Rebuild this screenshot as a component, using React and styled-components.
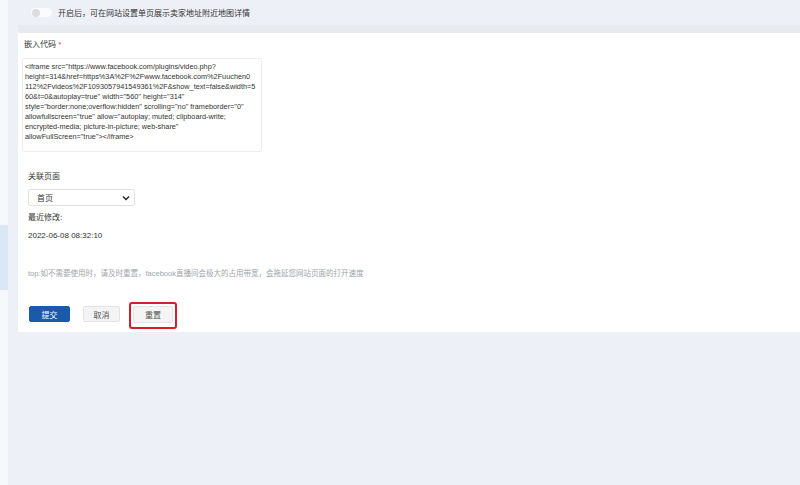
import React from "react";
import styled, { createGlobalStyle } from "styled-components";

const GlobalStyle = createGlobalStyle`
  html, body {
    margin: 0;
    padding: 0;
    background: #eef0f8;
    font-family: "Liberation Sans", "Noto Sans CJK SC", sans-serif;
    color: #333;
  }
`;

const codeLines = [
  '<iframe src="https://www.facebook.com/plugins/video.php?',
  "height=314&href=https%3A%2F%2Fwww.facebook.com%2Fuuchen0",
  "112%2Fvideos%2F1093057941549361%2F&show_text=false&width=5",
  '60&t=0&autoplay=true" width="560" height="314"',
  'style="border:none;overflow:hidden" scrolling="no" frameborder="0"',
  'allowfullscreen="true" allow="autoplay; muted; clipboard-write;',
  'encrypted-media; picture-in-picture; web-share"',
  'allowFullScreen="true"></iframe>',
];

export default function App() {
  return (
    <>
      <GlobalStyle />
      <Page>
        <Sidebar>
          <SideActive />
        </Sidebar>
        <Main>
          <TopBar>
            <Toggle>
              <Knob />
            </Toggle>
            <TopText>开启后，可在网站设置单页展示卖家地址附近地图详情</TopText>
          </TopBar>
          <Card>
            <FieldLabel>
              嵌入代码 <Star>*</Star>
            </FieldLabel>
            <CodeBox>
              {codeLines.map((line, i) => (
                <CodeLine key={i}>{line}</CodeLine>
              ))}
            </CodeBox>

            <SubBlock>
              <SubLabel>关联页面</SubLabel>
              <Select>
                <span>首页</span>
                <svg width="8" height="6" viewBox="0 0 8 6">
                  <path
                    d="M1 1.5 L4 4.5 L7 1.5"
                    fill="none"
                    stroke="#222"
                    strokeWidth="1.4"
                  />
                </svg>
              </Select>
              <SubLabel $top={7}>最近修改:</SubLabel>
              <DateText>2022-06-08 08:32:10</DateText>
            </SubBlock>

            <Tip>
              top:如不需要使用时，请及时重置，facebook直播间会极大的占用带宽，会拖延您网站页面的打开速度
            </Tip>

            <Actions>
              <Button $primary>提交</Button>
              <Button>取消</Button>
              <Highlight>
                <Button $wide>重置</Button>
              </Highlight>
            </Actions>
          </Card>
        </Main>
      </Page>
    </>
  );
}

const Page = styled.div`
  display: flex;
  min-height: 485px;
`;

const Sidebar = styled.div`
  width: 8px;
  background: #f7f8fb;
  padding-top: 225px;
  flex-shrink: 0;
`;

const SideActive = styled.div`
  height: 65px;
  background: #dce7f5;
`;

const Main = styled.div`
  flex: 1;
  padding-left: 10px;
  display: flex;
  flex-direction: column;
`;

const TopBar = styled.div`
  height: 25px;
  display: flex;
  align-items: center;
  padding-left: 13px;
  gap: 6px;
`;

const Toggle = styled.div`
  width: 20px;
  height: 9px;
  border-radius: 5px;
  background: #fafbfd;
  display: flex;
  align-items: center;
  padding-left: 1px;
`;

const Knob = styled.div`
  width: 8px;
  height: 8px;
  border-radius: 50%;
  background: #dcdde1;
`;

const TopText = styled.span`
  font-size: 8px;
  color: #333;
`;

const Card = styled.div`
  background: #fff;
  border-top: 8px solid #e8ebee;
  padding: 7px 0 3px 6px;
  display: flex;
  flex-direction: column;
  align-items: flex-start;
`;

const FieldLabel = styled.div`
  font-size: 8px;
  line-height: 10px;
  color: #333;
`;

const Star = styled.span`
  color: #e04a4a;
`;

const CodeBox = styled.div`
  margin-top: 8px;
  margin-left: -2px;
  width: 234px;
  height: 84px;
  padding: 3px 2px 5px 2px;
  border: 1px solid #ececec;
  border-radius: 2px;
  overflow: hidden;
`;

const CodeLine = styled.div`
  font-size: 7.3px;
  line-height: 10px;
  white-space: nowrap;
  color: #333;
`;

const SubBlock = styled.div`
  padding-left: 4px;
  margin-top: 20px;
  display: flex;
  flex-direction: column;
  align-items: flex-start;
`;

const SubLabel = styled.div`
  font-size: 8px;
  line-height: 10px;
  color: #333;
  margin-top: ${(p) => p.$top || 0}px;
`;

const Select = styled.div`
  margin-top: 7px;
  height: 15px;
  border: 1px solid #e2e2e2;
  border-radius: 2px;
  display: flex;
  align-items: center;
  justify-content: space-between;
  padding: 0 4px 0 8px;
  box-sizing: content-box;
  width: 93px;
  span {
    font-size: 8px;
    color: #333;
  }
`;

const DateText = styled.div`
  margin-top: 8px;
  font-size: 8px;
  line-height: 10px;
  color: #333;
`;

const Tip = styled.div`
  margin-top: 28px;
  padding-left: 4px;
  font-size: 7.5px;
  line-height: 10px;
  color: #a0a4ab;
`;

const Actions = styled.div`
  margin-top: 23px;
  padding-left: 5px;
  display: flex;
  align-items: flex-start;
`;

const Button = styled.div`
  margin-top: ${(p) => (p.$wide ? 0 : 4)}px;
  height: ${(p) => (p.$wide ? 17 : 16)}px;
  width: ${(p) => (p.$wide ? 40 : p.$primary ? 41 : 37)}px;
  margin-right: ${(p) => (p.$primary ? 13 : p.$wide ? 0 : 9)}px;
  box-sizing: border-box;
  display: flex;
  align-items: center;
  justify-content: center;
  font-size: 8px;
  border-radius: 2px;
  background: ${(p) => (p.$primary ? "#1a5aa8" : "#f4f4f5")};
  color: ${(p) => (p.$primary ? "#fff" : "#555")};
  border: 1px solid ${(p) => (p.$primary ? "#1a5aa8" : "#e3e3e3")};
`;

const Highlight = styled.div`
  padding: 2px 2px 4px;
  border: 2px solid #d21f2b;
  border-radius: 3px;
`;
